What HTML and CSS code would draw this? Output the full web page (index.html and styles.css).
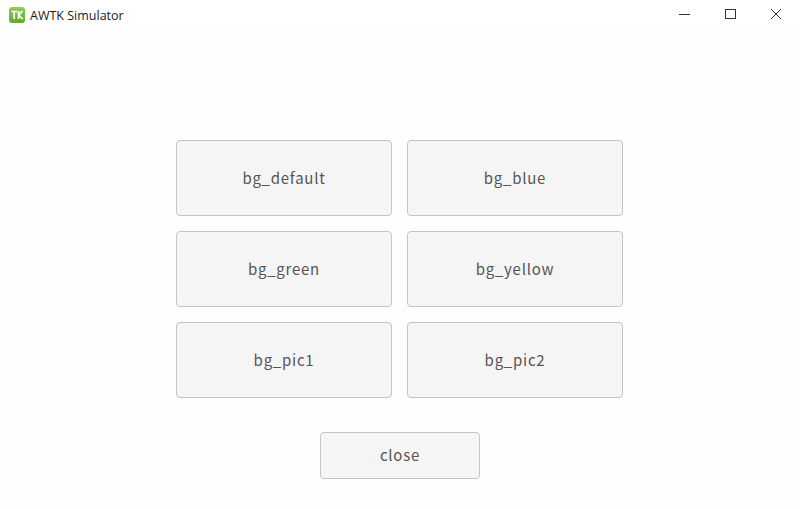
FILE: index.html
```html
<!DOCTYPE html>
<html lang="en">
<head>
<meta charset="utf-8">
<title>AWTK Simulator</title>
<link rel="stylesheet" href="styles.css">
</head>
<body>
<div class="window">
  <header class="titlebar">
    <div class="brand">
      <svg class="logo" width="16" height="16" viewBox="0 0 16 16">
        <defs><linearGradient id="g" x1="0" y1="0" x2="0" y2="1"><stop offset="0" stop-color="#8ed04f"/><stop offset="1" stop-color="#62a82c"/></linearGradient></defs>
        <rect width="16" height="16" rx="3" fill="url(#g)"/>
        <path d="M2.5 4.500H8M5.200 4.500V12M9.500 4v8M13.500 4 9.800 8l3.900 4" fill="none" stroke="#fff" stroke-width="1.700"/>
      </svg>
      <span class="title">AWTK Simulator</span>
    </div>
    <div class="controls">
      <svg class="ctl" width="46" height="30" viewBox="0 0 46 30"><path d="M18 14.500H29" stroke="#333" stroke-width="1" fill="none"/></svg>
      <svg class="ctl" width="46" height="30" viewBox="0 0 46 30"><rect x="18.500" y="9.500" width="10" height="9" stroke="#333" stroke-width="1" fill="none"/></svg>
      <svg class="ctl" width="46" height="30" viewBox="0 0 46 30"><path d="M18 9 28 19M28 9 18 19" stroke="#333" stroke-width="1" fill="none"/></svg>
    </div>
  </header>
  <main class="content">
    <div class="grid">
      <button class="btn">bg_default</button>
      <button class="btn">bg_blue</button>
      <button class="btn">bg_green</button>
      <button class="btn">bg_yellow</button>
      <button class="btn">bg_pic1</button>
      <button class="btn">bg_pic2</button>
    </div>
    <button class="btn close">close</button>
  </main>
</div>
</body>
</html>
```
FILE: styles.css
```css
* { box-sizing: border-box; }
html, body { margin: 0; padding: 0; }
body { background: #fff; font-family: "Noto Sans CJK SC", "Noto Sans", sans-serif; }
.window { width: 800px; height: 509px; display: flex; flex-direction: column; overflow: hidden; }
.titlebar { height: 30px; flex: none; display: flex; justify-content: space-between; align-items: center; background: #fff; }
.brand { display: flex; align-items: center; padding-left: 9px; gap: 5px; }
.logo { display: block; }
.title { font-family: "Open Sans", "Noto Sans", sans-serif; font-size: 12.500px; color: #1a1a1a; }
.controls { display: flex; margin-right: 1px; }
.ctl { display: block; }
.content { flex: 1; background: #fefefe; display: flex; flex-direction: column; align-items: center; padding-top: 110px; }
.grid { display: grid; grid-template-columns: 216px 216px; grid-auto-rows: 76px; gap: 15px; margin-right: 1px; }
.btn { background: #f5f5f5; border: 1px solid #c4c4c4; border-radius: 4px; color: #555; font-family: inherit; font-size: 15px; letter-spacing: 0.75px; padding: 0 0 2px; }
.close { width: 160px; height: 47px; margin-top: 34px; }
```
